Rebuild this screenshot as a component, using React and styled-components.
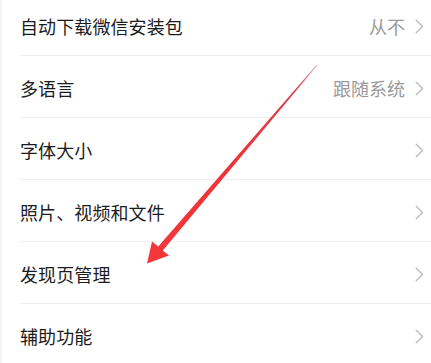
import React from "react";
import styled, { createGlobalStyle } from "styled-components";

const Global = createGlobalStyle`
  html, body { margin: 0; padding: 0; background: #ffffff; }
  body { font-family: "Noto Sans CJK SC", "Noto Sans", sans-serif; overflow: hidden; }
`;

const Page = styled.div`
  position: relative;
  width: 431px;
  height: 363px;
  overflow: hidden;
  background: #ffffff;
  border-left: 2px solid #f3f3f3;
  box-sizing: border-box;
`;

const List = styled.div`
  display: flex;
  flex-direction: column;
  margin-top: -6px;
  padding-left: 18px;
`;

const Row = styled.div`
  display: flex;
  align-items: center;
  height: 62px;
  padding-top: 3px;
  box-sizing: border-box;
  border-bottom: 1px solid #eeeeee;
  padding-right: 7px;
`;

const Label = styled.span`
  flex: 1;
  font-size: 18px;
  color: #1c1c1c;
  line-height: 1;
  letter-spacing: 0.1px;
`;

const Value = styled.span`
  font-size: 18px;
  color: #9a9a9a;
  line-height: 1;
  margin-right: 10px;
`;

const Chevron = styled.svg`
  width: 9px;
  height: 15px;
  flex: none;
`;

const Arrow = styled.svg`
  position: absolute;
  left: 0;
  top: 0;
  pointer-events: none;
`;

const items = [
  { label: "自动下载微信安装包", value: "从不" },
  { label: "多语言", value: "跟随系统" },
  { label: "字体大小" },
  { label: "照片、视频和文件" },
  { label: "发现页管理" },
  { label: "辅助功能" },
];

export default function App() {
  return (
    <>
      <Global />
      <Page>
        <List>
          {items.map((it) => (
            <Row key={it.label}>
              <Label>{it.label}</Label>
              {it.value && <Value>{it.value}</Value>}
              <Chevron viewBox="0 0 9 15">
                <path d="M1.2 1.2 L7.6 7.5 L1.2 13.8" fill="none" stroke="#bdbdbd" strokeWidth="1.4" strokeLinecap="round" strokeLinejoin="round" />
              </Chevron>
            </Row>
          ))}
        </List>
        <Arrow width="431" height="363" viewBox="0 0 431 363">
          <defs>
            <linearGradient id="ag" x1="315" y1="65" x2="145" y2="263" gradientUnits="userSpaceOnUse">
              <stop offset="0" stopColor="#e6a0a8" />
              <stop offset="0.12" stopColor="#d9404c" />
              <stop offset="0.5" stopColor="#ee3338" />
              <stop offset="1" stopColor="#f2383b" />
            </linearGradient>
          </defs>
          <polygon
            points="315.4,65.2 160.8,250.5 167,255.5 145,263.5 150,241.5 156.2,246.5 314.7,64.7"
            fill="url(#ag)"
          />
        </Arrow>
      </Page>
    </>
  );
}
